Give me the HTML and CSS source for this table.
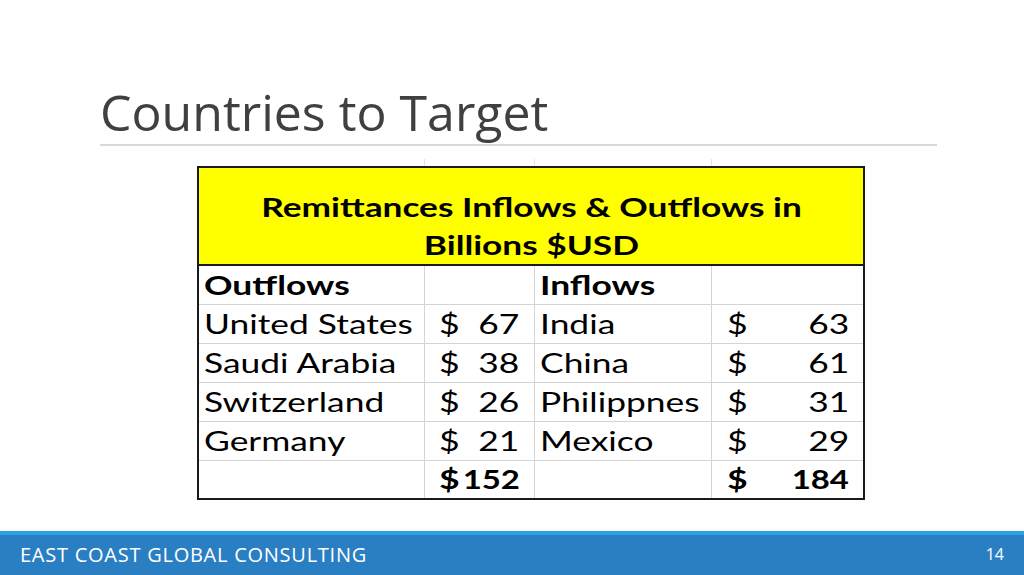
FILE: index.html
```html
<!DOCTYPE html>
<html>
<head>
<meta charset="utf-8">
<link rel="stylesheet" href="styles.css">
</head>
<body>
<div class="slide">
  <header class="title-area">
    <h1 class="title">Countries to Target</h1>
    <div class="rule"></div>
  </header>
  <main class="content">
    <div class="sheet">
      <div class="ghost">
        <span class="g1"></span><span class="g2"></span><span class="g3"></span><span class="g4"></span>
      </div>
      <table class="remit">
        <colgroup>
          <col class="c1"><col class="c2"><col class="c3"><col class="c4">
        </colgroup>
        <tr class="head">
          <td colspan="4"><div class="head-text"><span class="t">Remittances Inflows &amp; Outflows in</span><br><span class="t">Billions $USD</span></div></td>
        </tr>
        <tr class="sub">
          <td class="name b"><span class="t">Outflows</span></td><td></td><td class="name b"><span class="t">Inflows</span></td><td></td>
        </tr>
        <tr>
          <td class="name"><span class="t">United States</span></td>
          <td class="amt"><span class="cur">$</span><span class="num">67</span></td>
          <td class="name"><span class="t">India</span></td>
          <td class="amt amt2"><span class="cur">$</span><span class="num">63</span></td>
        </tr>
        <tr>
          <td class="name"><span class="t">Saudi Arabia</span></td>
          <td class="amt"><span class="cur">$</span><span class="num">38</span></td>
          <td class="name"><span class="t">China</span></td>
          <td class="amt amt2"><span class="cur">$</span><span class="num">61</span></td>
        </tr>
        <tr>
          <td class="name"><span class="t">Switzerland</span></td>
          <td class="amt"><span class="cur">$</span><span class="num">26</span></td>
          <td class="name"><span class="t">Philippnes</span></td>
          <td class="amt amt2"><span class="cur">$</span><span class="num">31</span></td>
        </tr>
        <tr>
          <td class="name"><span class="t">Germany</span></td>
          <td class="amt"><span class="cur">$</span><span class="num">21</span></td>
          <td class="name"><span class="t">Mexico</span></td>
          <td class="amt amt2"><span class="cur">$</span><span class="num">29</span></td>
        </tr>
        <tr class="total">
          <td></td>
          <td class="amt b"><span class="cur">$</span><span class="num">152</span></td>
          <td></td>
          <td class="amt amt2 b"><span class="cur">$</span><span class="num">184</span></td>
        </tr>
      </table>
    </div>
  </main>
  <footer class="footer">
    <span class="company">EAST COAST GLOBAL CONSULTING</span>
    <span class="page">14</span>
  </footer>
</div>
</body>
</html>
```

FILE: styles.css
```css
* { box-sizing: border-box; }
html, body { margin: 0; padding: 0; background: #fff; }
body { width: 1024px; height: 575px; overflow: hidden; }

.slide {
  width: 1024px;
  height: 575px;
  display: flex;
  flex-direction: column;
  font-family: "Open Sans", "Liberation Sans", sans-serif;
}

.title-area {
  padding: 81px 87px 0 100px;
}
.title {
  margin: 0;
  font-family: "Open Sans", sans-serif;
  font-weight: 400;
  font-size: 50px;
  line-height: 62px;
  color: #404040;
}
.rule {
  height: 2px;
  margin-top: 1px;
  background: #d9d9d9;
}

.content {
  flex: 1;
  display: flex;
  justify-content: flex-start;
  padding-left: 197px;
  padding-top: 13px;
}

.sheet { width: 668px; }

.ghost {
  display: flex;
  height: 7px;
  padding-left: 2px;
}
.ghost span { display: block; height: 7px; border-right: 1px solid #e4e4e4; }
.ghost .g1 { width: 226px; }
.ghost .g2 { width: 110px; }
.ghost .g3 { width: 177px; }
.ghost .g4 { width: 153px; border-right: none; }

.remit {
  border-collapse: collapse;
  table-layout: fixed;
  width: 668px;
  border: 2px solid #1a1a1a;
  font-family: Lato, "Carlito", sans-serif;
  color: #000;
}
.c1 { width: 226px; }
.c2 { width: 110px; }
.c3 { width: 177px; }
.c4 { width: 153px; }

.remit td {
  border: 1px solid #d4d4d4;
  height: 39px;
  padding: 0 5px;
  font-size: 27px;
  line-height: 32px;
  vertical-align: middle;
  white-space: nowrap;
  overflow: visible;
}

.t {
  display: inline-block;
  transform: scaleX(1.31);
  transform-origin: left center;
}

.remit .head td {
  background: #ffff00;
  height: 96px;
  border-bottom: 2px solid #1a1a1a;
  text-align: center;
  vertical-align: top;
  padding: 20px 0 0 0;
}
.head-text {
  font-weight: 700;
  font-size: 26px;
  line-height: 38px;
}
.head-text .t {
  transform: scaleX(1.355);
  transform-origin: center center;
}

.remit .sub td { border-top: none; }
.b { font-weight: 700; }

.remit td.amt { padding: 0 14px 0 14px; }
.remit td.amt2 { padding: 0 14px 0 15px; }
.amt .cur {
  float: left;
  transform: scaleX(1.32);
  transform-origin: left center;
}
.amt .num {
  float: right;
  transform: scaleX(1.31);
  transform-origin: right center;
}
.total .amt .num { transform: scaleX(1.22); }

.footer {
  height: 44px;
  border-top: 4px solid #2fa3dd;
  background: #2a7fc3;
  color: #fff;
  display: flex;
  align-items: center;
  justify-content: space-between;
  padding: 0 20px 2px 20px;
  font-family: "Open Sans", sans-serif;
  font-size: 20px;
}
.company { letter-spacing: 0.75px; }
.page { font-size: 16px; }
```
